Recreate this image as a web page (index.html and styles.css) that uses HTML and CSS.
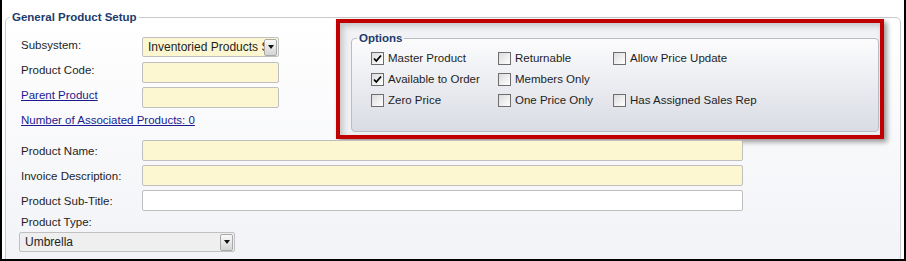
FILE: index.html
```html
<!DOCTYPE html>
<html>
<head>
  <meta charset="UTF-8" />
  <title>General Product Setup</title>
  <link rel="stylesheet" href="styles.css">
</head>
<body>

  <div class="frame">
    <fieldset class="group">
      <legend>General Product Setup</legend>

      <div class="top">
        <div class="fields">
          <div class="row">
            <span class="label">Subsystem:</span>
            <div class="select required narrow">
              <span class="value">Inventoried Products Subsystem</span>
              <span class="btn"><span class="arrow"></span></span>
            </div>
          </div>
          <div class="row">
            <span class="label">Product Code:</span>
            <div class="input required narrow"></div>
          </div>
          <div class="row">
            <a class="label link" href="#">Parent Product</a>
            <div class="input required narrow"></div>
          </div>
          <a class="link assoc" href="#">Number of Associated Products: 0</a>
        </div>

        <div class="highlight">
          <fieldset class="options">
            <legend>Options</legend>
            <div class="opt-grid">
              <label class="opt"><span class="box checked"><svg width="9" height="9" viewBox="0 0 9 9"><path d="M1 4.5 L3.3 7 L8 1.5" fill="none" stroke="#000" stroke-width="1.8"/></svg></span>Master Product</label>
              <label class="opt"><span class="box"></span>Returnable</label>
              <label class="opt"><span class="box"></span>Allow Price Update</label>

              <label class="opt"><span class="box checked"><svg width="9" height="9" viewBox="0 0 9 9"><path d="M1 4.5 L3.3 7 L8 1.5" fill="none" stroke="#000" stroke-width="1.8"/></svg></span>Available to Order</label>
              <label class="opt"><span class="box"></span>Members Only</label>
              <span></span>

              <label class="opt"><span class="box"></span>Zero Price</label>
              <label class="opt"><span class="box"></span>One Price Only</label>
              <label class="opt"><span class="box"></span>Has Assigned Sales Rep</label>
            </div>
          </fieldset>
        </div>
      </div>

      <div class="rows">
        <div class="row mid">
          <span class="label">Product Name:</span>
          <div class="input required wide"></div>
        </div>
        <div class="row mid">
          <span class="label">Invoice Description:</span>
          <div class="input required wide"></div>
        </div>
        <div class="row mid">
          <span class="label">Product Sub-Title:</span>
          <div class="input wide"></div>
        </div>
        <div class="type-label">Product Type:</div>
        <div class="select plain type">
          <span class="value">Umbrella</span>
          <span class="btn"><span class="arrow"></span></span>
        </div>
      </div>
    </fieldset>
  </div>

</body>
</html>
```

FILE: styles.css
```css
body {
  margin: 0;
  font-family: "Liberation Sans", Arial, sans-serif;
  font-size: 11.5px;
  color: #1e1e1e;
}

.frame {
  box-sizing: border-box;
  width: 906px;
  height: 261px;
  overflow: hidden;
  background: #fff;
  border: 2px solid #000;
  border-top: none;
  padding: 10px 3px 0 3px;
}

.group {
  margin: 0;
  padding: 0 0 12px 0;
  min-width: 0;
  border: 1px solid #c9cacd;
  border-radius: 5px;
  background: linear-gradient(#ffffff, #f2f3f7);
}

.group > legend {
  margin-left: 4px;
  padding: 0 2px;
  line-height: 14px;
  font-size: 11.5px;
  font-weight: bold;
  color: #1d3b6c;
}

.top {
  display: flex;
  align-items: flex-start;
  padding-left: 15px;
}

.fields {
  width: 315px;
  padding-top: 13px;
}

.row {
  display: flex;
  align-items: flex-start;
  margin-bottom: 4px;
}

.row .label {
  padding-top: 1px;
}

.row.mid {
  align-items: center;
}

.row.mid .label {
  padding-top: 0;
}

.label {
  width: 121px;
  line-height: 14px;
}

.link {
  color: #1b1b8f;
  text-decoration: underline;
}

.assoc {
  display: block;
  margin-top: 5px;
  line-height: 14px;
}

.input {
  box-sizing: border-box;
  height: 21px;
  border: 1px solid #bfbfbf;
  border-radius: 2px;
  background: #fff;
}

.required {
  background: #fdf7d1;
}

.narrow {
  width: 137px;
}

.wide {
  width: 601px;
}

.select {
  box-sizing: border-box;
  height: 20px;
  display: flex;
  align-items: center;
  border: 1px solid #c0c0c0;
  border-radius: 2px;
}

.select .value {
  flex: 1;
  overflow: hidden;
  white-space: nowrap;
  padding-left: 5px;
  font-size: 12px;
}

.select.plain {
  background: #efefef;
}

.select.narrow {
  margin-bottom: 1px;
}

.btn {
  box-sizing: border-box;
  width: 13px;
  height: 17px;
  margin-right: 1px;
  display: flex;
  align-items: center;
  justify-content: center;
  border: 1px solid #a9a9a9;
  border-radius: 2px;
  background: linear-gradient(#fafafa, #d4d4d4);
}

.arrow {
  width: 0;
  height: 0;
  border-left: 3px solid transparent;
  border-right: 3px solid transparent;
  border-top: 4px solid #111;
}

/* red annotation box round the Options group */
.highlight {
  box-sizing: border-box;
  width: 548px;
  height: 120px;
  margin: -5px 0 0 0;
  padding: 8px 1px 3px 11px;
  border: 4px solid #c00000;
  background: #f1f2f5;
  box-shadow: 3px 3px 5px rgba(0, 0, 0, 0.4), inset 3px 3px 6px rgba(0, 0, 0, 0.2);
  display: flex;
}

.options {
  flex: 1;
  margin: 0;
  padding: 3px 0 0 0;
  min-width: 0;
  border: 1px solid #b9bcc3;
  border-radius: 4px;
  background: linear-gradient(#fcfcfd, #d9dce4);
}

.options > legend {
  margin-left: 5px;
  padding: 0 2px;
  line-height: 14px;
  font-size: 11.5px;
  font-weight: bold;
  color: #1d3b6c;
}

.opt-grid {
  display: grid;
  grid-template-columns: 127px 115px auto;
  grid-auto-rows: 20px;
  row-gap: 1px;
  padding-left: 19px;
}

.opt {
  display: flex;
  align-items: center;
}

.box {
  box-sizing: border-box;
  width: 13px;
  height: 13px;
  margin-right: 4px;
  display: flex;
  align-items: center;
  justify-content: center;
  border: 1px solid #6e6e6e;
  background: linear-gradient(135deg, #dcdcdc, #ffffff);
}

.rows {
  padding: 1px 0 0 15px;
}

.type-label {
  line-height: 14px;
}

.select.type {
  width: 216px;
  margin: 3px 0 0 -2px;
}
```
